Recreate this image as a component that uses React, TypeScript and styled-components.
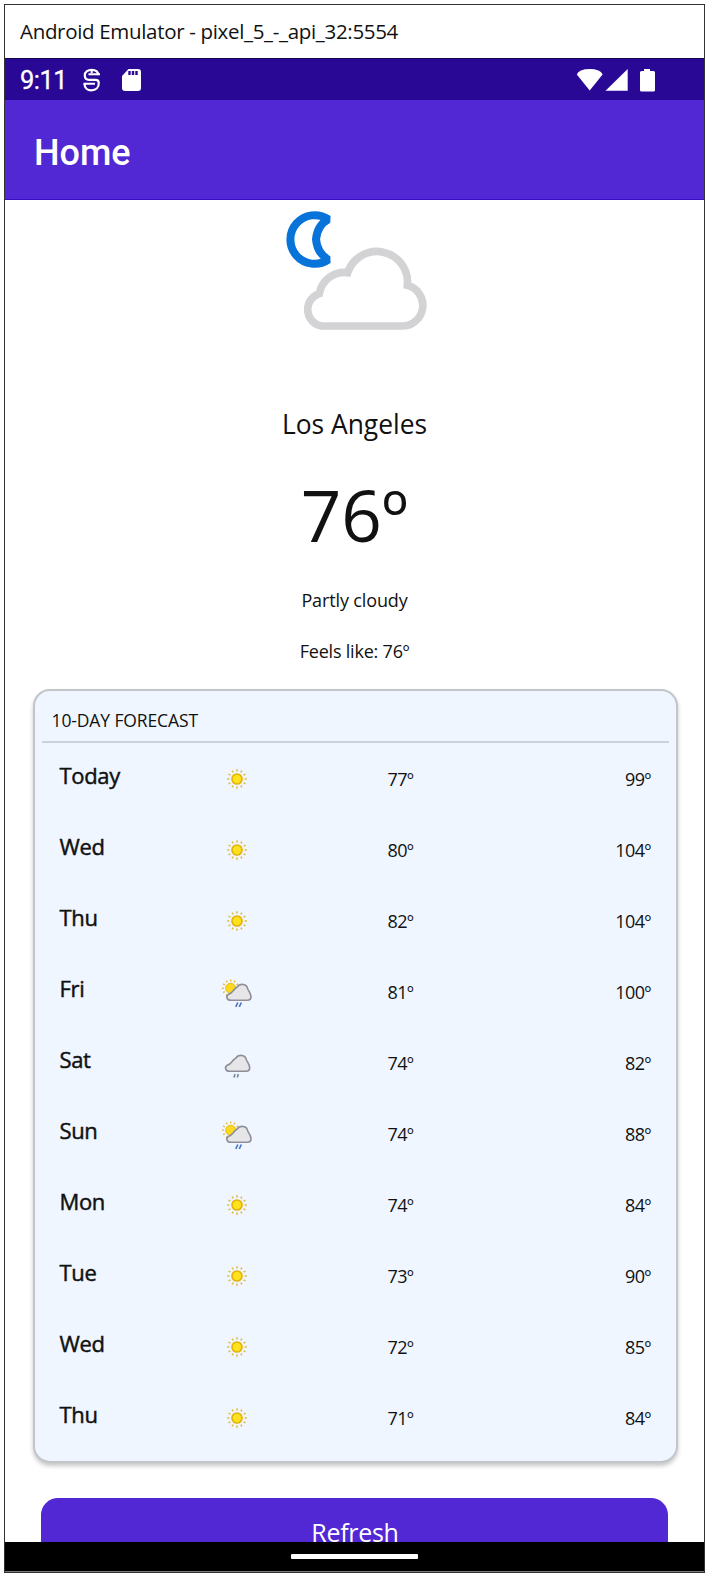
import React from 'react';
import styled, { createGlobalStyle } from 'styled-components';

const GlobalStyle = createGlobalStyle`
  * { box-sizing: border-box; }
  body { margin: 0; background: #fff; font-family: 'Open Sans', 'Noto Sans', sans-serif; color: #111; }
`;

const Page = styled.div`
  width: 709px;
  height: 1577px;
  padding: 4px;
  overflow: hidden;
`;

const Window = styled.div`
  width: 701px;
  height: 1569px;
  border: 1px solid #333;
  display: flex;
  flex-direction: column;
`;

const TitleBar = styled.header`
  flex: none;
  height: 53px;
  padding-left: 15px;
  line-height: 52px;
  font-size: 20.5px;
  letter-spacing: -0.32px;
  white-space: nowrap;
`;

const StatusBar = styled.div`
  flex: none;
  height: 42px;
  padding: 0 48px 0 15px;
  display: flex;
  align-items: center;
  background: #2a0896;
  border-top: 1px solid #160650;
  color: #fff;
`;

const Clock = styled.span`
  width: 62px;
  font: 400 25.5px/42px Roboto, sans-serif;
  letter-spacing: -0.5px;
  -webkit-text-stroke: 0.3px #fff;
`;

const StatusIcons = styled.div`
  margin-left: auto;
  display: flex;
`;

const AppBar = styled.div`
  flex: none;
  height: 100px;
  padding: 5px 0 0 29px;
  background: #5128d4;
  border-bottom: 1px solid #3a0fc4;
  color: #fff;
  font: 500 36px/97px Roboto, sans-serif;
`;

const Content = styled.main`
  flex: none;
  height: 1342px;
  overflow: hidden;
  display: flex;
  flex-direction: column;
  align-items: center;
`;

const HeroIcon = styled.svg`
  flex: none;
  display: block;
  margin: 1px 0 0 11px;
`;

const HeroText = styled.div<{ $size: number; $line: number; $gap: number; $track?: number }>`
  flex: none;
  margin-top: ${p => p.$gap}px;
  font-size: ${p => p.$size}px;
  line-height: ${p => p.$line}px;
  letter-spacing: ${p => p.$track ?? 0}px;
  white-space: nowrap;
`;

const Card = styled.section`
  flex: none;
  width: 645px;
  height: 774px;
  margin: 25.5px 0 0 1px;
  padding: 0 7px;
  background: #eff6ff;
  border: 2px solid #c0c6ca;
  border-radius: 17px;
  box-shadow: 0 3px 4px rgba(0, 0, 0, 0.22);
`;

const CardTitle = styled.h2`
  margin: 0;
  height: 52px;
  padding: 2px 0 0 10px;
  border-bottom: 2px solid #ccd2da;
  font-size: 17.5px;
  font-weight: 400;
  line-height: 54px;
  letter-spacing: -0.12px;
`;

const Row = styled.div`
  height: 71px;
  padding: 0 18px 2px;
  display: grid;
  grid-template-columns: 161px 167px 1fr 120px;
  align-items: center;
`;

const Day = styled.span`
  font-size: 22px;
  line-height: 30px;
  margin-bottom: 5px;
  letter-spacing: -0.35px;
  -webkit-text-stroke: 0.45px #111;
`;

const Temp = styled.span<{ $right?: boolean }>`
  margin-top: 2px;
  font-size: 18px;
  line-height: 26px;
  letter-spacing: -0.6px;
  text-align: ${p => (p.$right ? 'right' : 'left')};
`;

const Glyph = styled.svg`
  display: block;
  overflow: visible;
  margin-top: 2px;
`;

const RefreshButton = styled.button`
  flex: none;
  width: 627px;
  height: 66px;
  margin: 35px 0 0 0;
  padding: 0 0 0 1px;
  border: 0;
  border-radius: 17px;
  background: #5128d4;
  color: #fff;
  font: 400 25px/68px 'Open Sans', sans-serif;
  letter-spacing: -0.3px;
`;

const NavBar = styled.footer`
  flex: 1;
  background: #000;
  display: flex;
  justify-content: center;
  padding-top: 12px;
  border-bottom: 1px solid #777;
`;

const NavHandle = styled.div`
  width: 127px;
  height: 5px;
  border-radius: 1px;
  background: #fff;
`;

type Weather = 'sun' | 'sunRain' | 'rain';

const rays = Array.from({ length: 12 }, (_, i) => i * 30);

function WeatherGlyph({ kind }: { kind: Weather }) {
  if (kind === 'sun') {
    return (
      <Glyph width="32" height="32" viewBox="-16 -16 32 32">
        {rays.map(a => (
          <path key={a} d="M0 -7.6V-9.8" stroke="#dfba3e" strokeWidth="1.5" transform={`rotate(${a})`} />
        ))}
        <circle r="5" fill="#ffe11c" stroke="#e5b307" strokeWidth="1.7" />
      </Glyph>
    );
  }
  const withSun = kind === 'sunRain';
  return (
    <Glyph width="32" height="32" viewBox="0 0 32 32">
      {withSun && (
        <g transform="translate(9.7 12.3)">
          {rays.map(a => (
            <path key={a} d="M0 -6.8V-8.8" stroke="#e3bd45" strokeWidth="1.4" transform={`rotate(${a})`} />
          ))}
          <circle r="5" fill="#ffd91f" stroke="#eaba1a" />
        </g>
      )}
      <path
        d="M10 24.3C5.5 24.3 4.6 20 7.6 18.3C9.5 17.5 10.5 17 12 15C13.5 13 14.5 12.2 16 11.2C19 7 26 7.5 26.7 13C28 15.5 30 18 30 20.5C30 23 28.5 24.3 26.3 24.3Z"
        transform={withSun ? undefined : 'translate(-1.3 0)'}
        fill="#e6e6e8"
        stroke="#8e8d98"
        strokeWidth="1.6"
      />
      <path
        d={withSun ? 'M16.8 26.5l-2 4.4M20.3 26.5l-2 4.4' : 'M14 27l-1 3.4M17.3 27l-1 3.4'}
        stroke={withSun ? '#4770c8' : '#77869c'}
        strokeWidth="1.6"
      />
    </Glyph>
  );
}

const forecast: [string, Weather, number, number][] = [
  ['Today', 'sun', 77, 99],
  ['Wed', 'sun', 80, 104],
  ['Thu', 'sun', 82, 104],
  ['Fri', 'sunRain', 81, 100],
  ['Sat', 'rain', 74, 82],
  ['Sun', 'sunRain', 74, 88],
  ['Mon', 'sun', 74, 84],
  ['Tue', 'sun', 73, 90],
  ['Wed', 'sun', 72, 85],
  ['Thu', 'sun', 71, 84],
];

export default function App() {
  return (
    <>
      <GlobalStyle />
      <Page>
        <Window>
          <TitleBar>Android Emulator - pixel_5_-_api_32:5554</TitleBar>
          <StatusBar>
            <Clock>9:11</Clock>
            <svg width="60" height="24" viewBox="0 0 60 24" fill="none">
              <path d="M16.5 7C16 3.5 13.5 1.8 9.7 1.8C5.5 1.8 2.8 4 2.8 7.2C2.8 10 4.5 11.8 7 11.8H13.5C15.8 11.8 16.8 13 16.8 15C16.8 19.5 14 22.3 9.5 22.3C5 22.3 2.5 19.5 2.5 15.7" stroke="#fff" strokeWidth="2.2" />
              <path d="M1.5 15.8H13M6.5 6.2H18M9.7 2v3" stroke="#fff" strokeWidth="2" />
              <path d="M46.5 1H56Q59 1 59 4V20Q59 23 56 23H43Q40 23 40 20V8Z" fill="#fff" />
              <path d="M47.5 3v4M51 3v4M54.5 3v4" stroke="#2a0896" strokeWidth="2.4" />
            </svg>
            <StatusIcons>
              <svg width="80" height="24" viewBox="0 0 80 24" fill="#fff">
                <path d="M0.8 6.5Q3 1 13.7 1T26.6 6.5L13.7 22.5Z" />
                <path d="M51.7 1V22.8H29.5Z" />
                <path d="M64.5 3H68V1H74V3H77.5Q79 3 79 4.5V22Q79 23.5 77.5 23.5H65.5Q64 23.5 64 22V4.5Q64 3 65.5 3Z" />
              </svg>
            </StatusIcons>
          </StatusBar>
          <AppBar>Home</AppBar>
          <Content>
            <HeroIcon width="200" height="144" viewBox="0 18 600 432" fill="none">
              <path d="M205 73A73 73 0 1 0 205 194Q172 175 168 133Q172 91 205 73Z" stroke="#0873d8" strokeWidth="24" strokeLinejoin="bevel" />
              <path d="M185 393A50 50 0 0 1 178 296A76 76 0 0 1 263 233A92 92 0 0 1 442 271A62 62 0 0 1 425 393Z" stroke="#d3d3d5" strokeWidth="23" />
            </HeroIcon>
            <HeroText $size={26.4} $line={36} $gap={61}>Los Angeles</HeroText>
            <HeroText $size={71} $line={96} $gap={25}>76º</HeroText>
            <HeroText $size={18} $line={25} $gap={24.5} $track={-0.13}>Partly cloudy</HeroText>
            <HeroText $size={18} $line={25} $gap={26} $track={-0.2}>Feels like: 76º</HeroText>
            <Card>
              <CardTitle>10-DAY FORECAST</CardTitle>
              {forecast.map(([day, kind, low, high], i) => (
                <Row key={i}>
                  <Day>{day}</Day>
                  <WeatherGlyph kind={kind} />
                  <Temp>{low}º</Temp>
                  <Temp $right>{high}º</Temp>
                </Row>
              ))}
            </Card>
            <RefreshButton>Refresh</RefreshButton>
          </Content>
          <NavBar><NavHandle /></NavBar>
        </Window>
      </Page>
    </>
  );
}
